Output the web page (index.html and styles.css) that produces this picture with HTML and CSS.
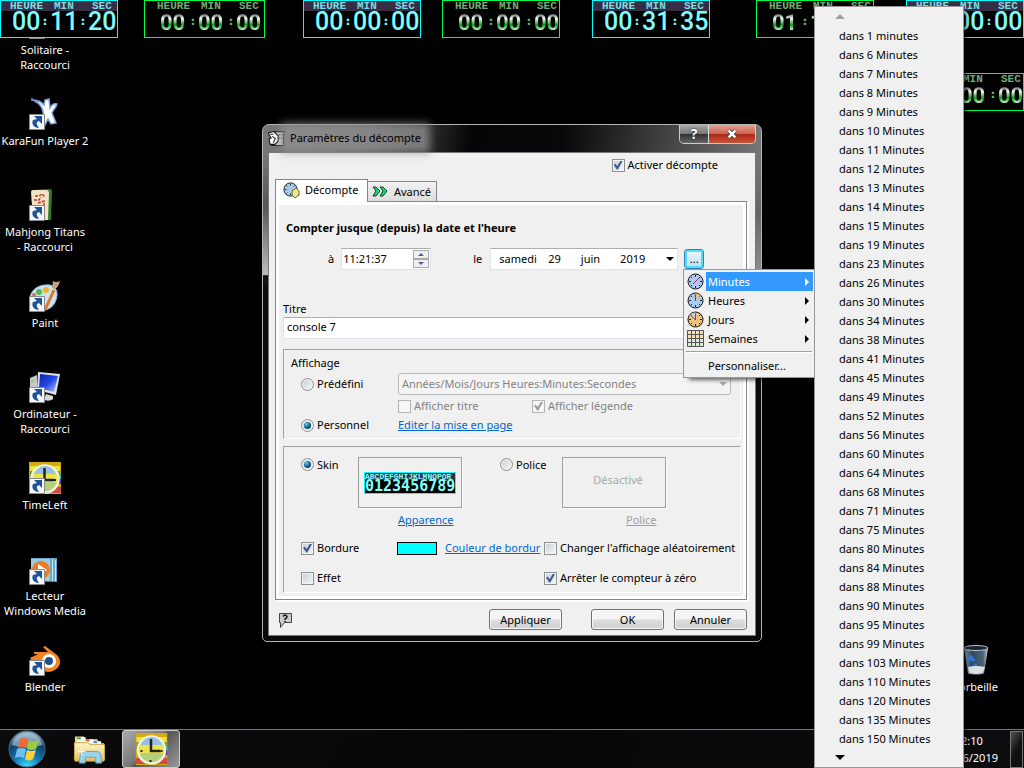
FILE: index.html
```html
<!DOCTYPE html>
<html lang="fr">
<head>
<meta charset="utf-8">
<title>Paramètres du décompte</title>
<link rel="stylesheet" href="styles.css">
</head>
<body>
<svg class="defs" aria-hidden="true">
  <defs>
    <linearGradient id="paper" x2="0" y2="1"><stop stop-color="#fff6c8"/><stop offset="1" stop-color="#e5c66b"/></linearGradient>
    <linearGradient id="screen" x2="1" y2="1"><stop stop-color="#0a22a8"/><stop offset=".5" stop-color="#2346e6"/><stop offset="1" stop-color="#b8ccff"/></linearGradient>
    <linearGradient id="bin" x2="1"><stop stop-color="#9fb0bd"/><stop offset=".3" stop-color="#33475a"/><stop offset=".8" stop-color="#4b6277"/><stop offset="1" stop-color="#c6d2da"/></linearGradient>
    <radialGradient id="orb" cx=".5" cy="1" r="1"><stop stop-color="#3fe0ff"/><stop offset=".35" stop-color="#1180c0"/><stop offset=".7" stop-color="#123f66"/><stop offset="1" stop-color="#8fb3c9"/></radialGradient>
    <symbol id="shortcut" viewBox="0 0 16 16"><path fill="#f4f6f8" stroke="#888" d="M.5.5h15v15H.5z"/><path fill="#1f5299" d="M5 2h8v8l-3-3c-3 1-3 3 0 7-5 0-8-4-6-8l4-1z"/></symbol>
    <symbol id="timeleft" viewBox="0 0 32 32"><path fill="#d3aa12" d="M0 0h32v32H0z"/><path fill="#ece639" d="M1 4h30v5H1z"/><path fill="#78953a" d="M1 9h30v7H1z"/><path fill="#21bbb2" d="M27 12h5v5h-5z"/><path fill="#6035a2" d="M27 17h5v5h-5z"/><path fill="#d54a43" d="M0 25h32v6H0z"/><circle cx="16" cy="17" r="13.5" fill="#b6cf7c" stroke="#f2f3df" stroke-width="2.5"/><path fill="#9abfe6" d="M5 12Q9 4 16 4t11 8z"/><path fill="#ede44a" d="M4 12h24l1 8H4z"/><path fill="none" stroke="#222" stroke-width="2.5" d="M15.500 6v12H25"/><path stroke="#222" stroke-width="2" d="M5 18h2M27 18h-2M15 27v2"/></symbol>
    <symbol id="dial" viewBox="0 0 17 17"><circle cx="8.500" cy="8.500" r="7.500" stroke="#111"/><path fill="none" stroke="#223" d="M8.500 2v2M8.500 13v2M2 8.500h2M13 8.500h2M4 4l1 1M13 4l-1 1M4 13l1-1M13 13l-1-1"/></symbol>
  </defs>
</svg>

<main class="desktop">
  <section class="clock cyan at-1"><div class="units"><span>HEURE</span><span>MIN</span><span>SEC</span></div><div class="digits"><span>00</span><i>:</i><span>11</span><i>:</i><span>20</span></div></section>
  <section class="clock green at-2"><div class="units"><span>HEURE</span><span>MIN</span><span>SEC</span></div><div class="digits"><span>00</span><i>:</i><span>00</span><i>:</i><span>00</span></div></section>
  <section class="clock cyan at-3"><div class="units"><span>HEURE</span><span>MIN</span><span>SEC</span></div><div class="digits"><span>00</span><i>:</i><span>00</span><i>:</i><span>00</span></div></section>
  <section class="clock green at-4"><div class="units"><span>HEURE</span><span>MIN</span><span>SEC</span></div><div class="digits"><span>00</span><i>:</i><span>00</span><i>:</i><span>00</span></div></section>
  <section class="clock cyan at-5"><div class="units"><span>HEURE</span><span>MIN</span><span>SEC</span></div><div class="digits"><span>00</span><i>:</i><span>31</span><i>:</i><span>35</span></div></section>
  <section class="clock green at-6"><div class="units"><span>HEURE</span><span>MIN</span><span>SEC</span></div><div class="digits"><span>01</span><i>:</i><span>10</span><i>:</i><span>00</span></div></section>
  <section class="clock cyan at-7"><div class="units"><span>HEURE</span><span>MIN</span><span>SEC</span></div><div class="digits"><span>00</span><i>:</i><span>00</span><i>:</i><span>00</span></div></section>
  <section class="clock green at-8"><div class="units"><span>HEURE</span><span>MIN</span><span>SEC</span></div><div class="digits"><span>00</span><i>:</i><span>00</span><i>:</i><span>00</span></div></section>

  <nav class="shortcuts">
    <a href="#" class="shortcut"><svg viewBox="0 0 32 32"><use href="#shortcut" y="16" width="16" height="16"/></svg><span>Solitaire -<br>Raccourci</span></a>
    <a href="#" class="shortcut"><svg viewBox="0 0 32 32"><path fill="#fff" stroke="#7a9fe0" stroke-width="1.500" d="M3 2c5 0 9 1 12 5l1-5 4-1 1 9c2-4 4-5 7-4-1 4-4 6-5 9l4 10-5 1-3-5-3 6-3-1c2-9 2-15-3-20-2-2-5-3-7-5z"/><use href="#shortcut" y="16" width="16" height="16"/></svg><span>KaraFun Player 2</span></a>
    <a href="#" class="shortcut"><svg viewBox="0 0 32 32"><path fill="#2c7a2c" d="M4 1l16-1q3 0 3 3l-1 28h-4z"/><path fill="#f3e3c4" d="M2 3q0-2 2-2h13q3 0 3 3l-1 27H4z"/><path fill="none" stroke="#bd3c35" stroke-width="1.500" stroke-dasharray="3 1" d="M6 7h4l3-2 3 3M5 11h5l2-3M9 14l6-2v5M8 18l8-1"/><use href="#shortcut" y="16" width="16" height="16"/></svg><span>Mahjong Titans<br>- Raccourci</span></a>
    <a href="#" class="shortcut"><svg viewBox="0 0 32 32"><path fill="#c8e4f4" stroke="#7fb4d8" d="M1 18C2 8 12 4 21 5c8 2 8 10 6 15-2 6-6 9-11 10z"/><circle cx="17" cy="10" r="3" fill="#f4b122"/><circle cx="10" cy="12" r="3" fill="#5cb845"/><circle cx="5" cy="15" r="2" fill="#df6d5c"/><path stroke="#dc7b23" stroke-width="3" d="M16 30l9-20"/><path fill="#caa27c" d="M23 8l1-7q3 2 7 0-1 5-5 8z"/><use href="#shortcut" y="16" width="16" height="16"/></svg><span>Paint</span></a>
    <a href="#" class="shortcut"><svg viewBox="0 0 32 32"><path fill="#c6c9cc" d="M1 7l7-3v12H1z"/><path fill="#7ed348" d="M2 9h3v2H2z"/><path fill="#dfe2e6" d="M9 1l22 2-4 21-19-5z"/><path fill="url(#screen)" d="M11 3l18 2-4 16-15-4z"/><path fill="#d6d8dc" d="M17 23l7 2v3q-3 3-9 1z"/><use href="#shortcut" y="16" width="16" height="16"/></svg><span>Ordinateur -<br>Raccourci</span></a>
    <a href="#" class="shortcut"><svg viewBox="0 0 32 32"><use href="#timeleft" width="32" height="32"/><use href="#shortcut" y="16" width="16" height="16"/></svg><span>TimeLeft</span></a>
    <a href="#" class="shortcut"><svg viewBox="0 0 32 32"><path fill="#68a5c7" d="M2 5h26v24L2 28z"/><path stroke="#c9e6f2" d="M23.500 6v22M26.500 7v21"/><path fill="#9ccbdf" d="M2 6h19v22H2z"/><circle cx="12" cy="17" r="9" fill="#f07b20"/><path fill="#fff" d="M9 11l9 6-9 6z"/><use href="#shortcut" y="16" width="16" height="16"/></svg><span>Lecteur<br>Windows Media</span></a>
    <a href="#" class="shortcut"><svg viewBox="0 0 32 32"><path fill="#f5821f" d="M14 3l2-1 12 9c8 9-1 17-9 17-8-1-12-6-9-12H2l-1-2 8-4H5V8h14z"/><circle cx="20" cy="17" r="7" fill="#fff"/><circle cx="20" cy="17" r="4" fill="#1d4f90"/><use href="#shortcut" y="16" width="16" height="16"/></svg><span>Blender</span></a>
  </nav>
  <a href="#" class="shortcut bin"><svg viewBox="0 0 32 32"><path fill="url(#bin)" d="M5 4h24l-4 26q-8 2-16 0z"/><ellipse cx="17" cy="4" rx="12" ry="2.500" fill="#19242e" stroke="#b9c7d1"/><path fill="none" stroke="#2f7ae0" stroke-width="3" d="M9 18l3-5 3 4M17 20l-2 4h-4"/><path fill="#dce0e2" d="M9 23q8-2 17 0l-2 6q-7 2-14 0z"/></svg><span>Corbeille</span></a>

  <section class="dialog" role="dialog" aria-labelledby="dialog-title">
    <header class="titlebar">
      <svg class="app-icon" viewBox="0 0 16 16"><path fill="#c8c8c8" stroke="#222" d="M5.500 1.500h10l-1 3v10h-11l2-3z"/><path fill="#fff" stroke="#111" d="M.5 2.500l5-1 4 4v5l-3 3H2l-1-5 2-1-2-3z"/><path fill="none" stroke="#222" d="M2 4h3M4 6l3 2-2 4M11 4v1m2-1v1m-2 2v1m2-1v1"/></svg>
      <h1 id="dialog-title">Paramètres du décompte</h1>
      <div class="caption"><button class="ask" type="button" aria-label="Aide">?</button><button class="close" type="button" aria-label="Fermer"><svg viewBox="0 0 14 12"><path fill="none" stroke="#444" stroke-width="5" d="M3 2l8 8m0-8l-8 8"/><path fill="none" stroke="#fff" stroke-width="3" d="M3 2l8 8m0-8l-8 8"/></svg></button></div>
    </header>
    <form class="client">
      <label class="check activate"><input type="checkbox" checked>Activer décompte</label>
      <div class="tabs" role="tablist">
        <button type="button" class="tab current" role="tab" aria-selected="true"><svg viewBox="0 0 17 17"><use href="#dial" fill="#a7c9ee" width="15" height="15"/><path fill="#ece78b" stroke="#66662a" d="M9 9l4-3 3 3v4l-4 3-3-3z"/></svg>Décompte</button>
        <button type="button" class="tab" role="tab" aria-selected="false"><svg viewBox="0 0 17 17"><path fill="#19d47c" stroke="#173f2d" d="M1 4h3l4 4-4 5H1l3-5zM8 4h3l4 4-4 5H8l3-5z"/></svg>Avancé</button>
      </div>
      <div class="panel"><div class="page">
        <h2>Compter jusque (depuis) la date et l'heure</h2>
        <div class="when">
          <label for="time">à</label>
          <span class="spin"><input id="time" type="text" value="11:21:37"><span class="steps"><button type="button" aria-label="Plus"></button><button type="button" aria-label="Moins"></button></span></span>
          <label for="date" class="on">le</label>
          <span class="pick date"><select id="date"><option>samedi&nbsp;&nbsp;&nbsp;&nbsp;29&nbsp;&nbsp;&nbsp;&nbsp;&nbsp;&nbsp;&nbsp;juin&nbsp;&nbsp;&nbsp;&nbsp;&nbsp;&nbsp;&nbsp;2019</option></select></span>
          <button type="button" class="more">...</button>
        </div>
        <label class="caption-label" for="title">Titre</label>
        <input class="title-box" id="title" type="text" value="console 7">

        <section class="group display">
          <h3>Affichage</h3>
          <div class="row preset"><label class="check"><input type="radio" name="mode">Prédéfini</label><span class="pick disabled"><select disabled aria-label="Format"><option>Années/Mois/Jours Heures:Minutes:Secondes</option></select></span></div>
          <div class="row options"><label class="check off"><input type="checkbox" disabled>Afficher titre</label><label class="check off"><input type="checkbox" disabled checked>Afficher légende</label></div>
          <div class="row custom"><label class="check"><input type="radio" name="mode" checked>Personnel</label><a href="#">Editer la mise en page</a></div>
        </section>

        <section class="group look">
          <div class="row faces">
            <label class="check"><input type="radio" name="look" checked>Skin</label>
            <div class="sample"><div class="skin"><span class="letters">ABCDEFGHIJKLMNOPQR</span><span class="numbers">0123456789</span></div></div>
            <label class="check font"><input type="radio" name="look">Police</label>
            <div class="sample off">Désactivé</div>
          </div>
          <div class="row links"><a href="#">Apparence</a><a href="#" class="dead">Police</a></div>
          <div class="row edge"><label class="check"><input type="checkbox" checked>Bordure</label><button type="button" class="swatch" aria-label="Couleur"></button><a href="#">Couleur de bordur</a><label class="check"><input type="checkbox">Changer l'affichage aléatoirement</label></div>
          <div class="row effect"><label class="check"><input type="checkbox">Effet</label><label class="check"><input type="checkbox" checked>Arrêter le compteur à zéro</label></div>
        </section>
      </div></div>
      <footer class="actions">
        <svg viewBox="0 0 16 16"><path fill="#ccc" stroke="#444" d="M1.500 1.500h12v9h-7l-4 5v-5h-1z"/><path fill="none" stroke="#111" stroke-width="1.500" d="M5 4.500q2-3 4 0 0 1.500-2 2.500v1m0 1v1"/></svg>
        <button type="button" class="push">Appliquer</button>
        <button type="button" class="push ok">OK</button>
        <button type="button" class="push">Annuler</button>
      </footer>
    </form>
  </section>

  <div class="menu units-menu" role="menu">
    <button type="button" class="active" role="menuitem"><svg viewBox="0 0 17 17"><use href="#dial" fill="#a9cbf3"/><path stroke="#b02a5a" d="M6 11l6-6"/></svg><span>Minutes</span></button>
    <button type="button" role="menuitem"><svg viewBox="0 0 17 17"><use href="#dial" fill="#a9cbf3"/><path fill="#f0c070" d="M8.500 8.500V1.500q3 0 5 2z"/><path stroke="#b02a5a" d="M8.500 9V3"/></svg><span>Heures</span></button>
    <button type="button" role="menuitem"><svg viewBox="0 0 17 17"><use href="#dial" fill="#efc27a"/><path fill="#b5d4f4" d="M8.500 8.500V1.500q-3 0-5 2z"/><path stroke="#b02a5a" d="M8.500 9V3M8.500 9l-4-4"/></svg><span>Jours</span></button>
    <button type="button" role="menuitem"><svg viewBox="0 0 17 17"><path fill="#f8dfb0" d="M0 0h17v8H0z"/><path fill="#dcebd9" d="M0 8h17v9H0z"/><path fill="none" stroke="#555" d="M.5.5h16v16H.5zM4.500 0v17M8.500 0v17M12.500 0v17M0 4.500h17M0 8.500h17M0 12.500h17"/></svg><span>Semaines</span></button>
    <hr>
    <button type="button" class="plain" role="menuitem"><span>Personnaliser...</span></button>
  </div>
</main>

<footer class="taskbar">
  <button type="button" class="start" aria-label="Démarrer"><svg viewBox="0 0 38 38"><circle cx="19" cy="19" r="18" fill="url(#orb)" stroke="#46667a"/><path fill="#d9e8f1" opacity=".5" d="M4 15Q7 3 19 3t15 12q-14 5-30 0z"/><path fill="#ef6a32" d="M12 9q4-2 8 0l-2 9q-4-2-8 0z"/><path fill="#9ccb3b" d="M21 10q5 3 10 0l-3 9q-4 2-9 0z"/><path fill="#70bff0" d="M9 19q4-2 9 0l-2 9q-4-2-9 0z"/><path fill="#ffd23c" d="M19 20q4 2 9 0l-3 9q-4 3-8 0z"/></svg></button>
  <button type="button" class="task" aria-label="Explorateur"><svg viewBox="0 0 34 32"><path fill="#f0d68a" d="M2 3h9l2 3h12l2 4h5v19H2z"/><path fill="#fff" d="M4 4h9v5H4zM12 6h9v4h-9zM20 8h9v4h-9z"/><path fill="#27b02e" d="M4 4h4v2H4z"/><path fill="#dd4a26" d="M13 6h4v2h-4z"/><path fill="#2a8ce0" d="M21 8h4v2h-4z"/><path fill="url(#paper)" stroke="#cba951" d="M1.500 9.500h14l2 2h15v16h-31z"/><path fill="#9fd3ec" stroke="#5ba5cc" d="M6.500 30.500l1-9q1-3 4-3h13q3 0 4 3l1 9h-6v-6h-11v6z"/><path stroke="#fff" d="M9 14v9M5 18.500h8"/></svg></button>
  <button type="button" class="task running" aria-label="TimeLeft"><svg viewBox="0 0 32 32"><use href="#timeleft" width="32" height="32"/></svg></button>
  <div class="tray"><span>22:10</span><span>29/06/2019</span></div>
  <button type="button" class="peek" aria-label="Bureau"></button>
</footer>

<div class="menu delays" role="menu">
  <button type="button" class="scroll up" aria-label="Défiler vers le haut"></button>
  <button type="button" role="menuitem">dans 1 minutes</button>
  <button type="button" role="menuitem">dans 6 Minutes</button>
  <button type="button" role="menuitem">dans 7 Minutes</button>
  <button type="button" role="menuitem">dans 8 Minutes</button>
  <button type="button" role="menuitem">dans 9 Minutes</button>
  <button type="button" role="menuitem">dans 10 Minutes</button>
  <button type="button" role="menuitem">dans 11 Minutes</button>
  <button type="button" role="menuitem">dans 12 Minutes</button>
  <button type="button" role="menuitem">dans 13 Minutes</button>
  <button type="button" role="menuitem">dans 14 Minutes</button>
  <button type="button" role="menuitem">dans 15 Minutes</button>
  <button type="button" role="menuitem">dans 19 Minutes</button>
  <button type="button" role="menuitem">dans 23 Minutes</button>
  <button type="button" role="menuitem">dans 26 Minutes</button>
  <button type="button" role="menuitem">dans 30 Minutes</button>
  <button type="button" role="menuitem">dans 34 Minutes</button>
  <button type="button" role="menuitem">dans 38 Minutes</button>
  <button type="button" role="menuitem">dans 41 Minutes</button>
  <button type="button" role="menuitem">dans 45 Minutes</button>
  <button type="button" role="menuitem">dans 49 Minutes</button>
  <button type="button" role="menuitem">dans 52 Minutes</button>
  <button type="button" role="menuitem">dans 56 Minutes</button>
  <button type="button" role="menuitem">dans 60 Minutes</button>
  <button type="button" role="menuitem">dans 64 Minutes</button>
  <button type="button" role="menuitem">dans 68 Minutes</button>
  <button type="button" role="menuitem">dans 71 Minutes</button>
  <button type="button" role="menuitem">dans 75 Minutes</button>
  <button type="button" role="menuitem">dans 80 Minutes</button>
  <button type="button" role="menuitem">dans 84 Minutes</button>
  <button type="button" role="menuitem">dans 88 Minutes</button>
  <button type="button" role="menuitem">dans 90 Minutes</button>
  <button type="button" role="menuitem">dans 95 Minutes</button>
  <button type="button" role="menuitem">dans 99 Minutes</button>
  <button type="button" role="menuitem">dans 103 Minutes</button>
  <button type="button" role="menuitem">dans 110 Minutes</button>
  <button type="button" role="menuitem">dans 120 Minutes</button>
  <button type="button" role="menuitem">dans 135 Minutes</button>
  <button type="button" role="menuitem">dans 150 Minutes</button>
  <button type="button" class="scroll down" aria-label="Défiler vers le bas"></button>
</div>
</body>
</html>
```
FILE: styles.css
```css
* { box-sizing: border-box; }
body {
  margin: 0;
  min-height: 100vh;
  display: flex;
  flex-direction: column;
  position: relative;
  overflow: hidden;
  background: #000;
  color: #000;
  font: 11px/16px "Noto Sans", "Open Sans", sans-serif;
}
button, input, select { font: inherit; color: inherit; margin: 0; }
button { padding: 0; border: 0; background: none; }
h1, h2, h3 { margin: 0; font: inherit; }
a { color: #0066cc; }
svg { display: block; flex: none; }
.defs { position: absolute; width: 0; height: 0; }
.desktop { flex: 1; position: relative; }

/* Countdown widgets, free on the desktop */
.clock {
  position: absolute;
  width: 118px;
  height: 38px;
  border: 1px solid #00ffff;
  background: #000;
  color: #7ffcff;
  overflow: hidden;
  z-index: 1;
}
.units {
  display: grid;
  grid-template-columns: 44px 38px 1fr;
  padding-left: 9px;
  height: 10px;
  font: bold 11px/10px "Liberation Mono", monospace;
}
.cyan .units { background: #352e45; color: #79dbe5; }
.digits {
  display: grid;
  grid-template-columns: 28px 10px 28px 10px 28px;
  padding-left: 11px;
  font: 500 25px/21px Roboto, sans-serif;
}
.digits i { font: bold 13px/20px "DejaVu Sans Mono", monospace; text-align: center; }
.green { border-color: #00ff40; color: #6fae6f; }
.green .units { color: #75aa75; padding-left: 12px; }
.green .digits { padding-left: 15px; font: bold 22px/23px Roboto, sans-serif; }
.green .digits span {
  background: linear-gradient(#555 12%, #f4fff4 32%, #119c1b 60%, #d8ffd8 85%);
  background-clip: text;
  color: transparent;
}
.at-1 { left: 0; top: 0; }
.at-2 { left: 144px; top: 0; width: 121px; }
.at-3 { left: 303px; top: 0; }
.at-4 { left: 442px; top: 0; }
.at-5 { left: 592px; top: 0; }
.at-6 { left: 756px; top: 0; }
.at-7 { right: 0; top: 0; }
.at-8 { right: 0; top: 73px; }

/* Desktop shortcuts */
.shortcuts { display: grid; grid-template-rows: repeat(7, 91px) auto; width: 90px; padding-top: 7px; }
.shortcut {
  display: flex;
  flex-direction: column;
  align-items: center;
  gap: 3px;
  color: #fff;
  line-height: 15px;
  text-align: center;
  text-decoration: none;
  white-space: nowrap;
}
.shortcut svg { width: 32px; height: 32px; }
.bin { position: absolute; right: 4px; bottom: 35px; width: 90px; }

/* Dialog window */
.dialog {
  position: absolute;
  left: 262px;
  top: 124px;
  width: 500px;
  padding: 0 5px 5px;
  border: 1px solid #b5b5b5;
  border-radius: 7px 7px 5px 5px;
  background:
    linear-gradient(100deg, #777 0, #666 20%, #050507 42%, #08080a 60%, #4c4c4c 84%, #777 100%) top / 100% 28px no-repeat,
    linear-gradient(#777, #555 40%, #bbb 92%, #111 93%) left 28px / 6px 132px no-repeat,
    linear-gradient(#777, #666 40%, #999 90%, #111) right 28px / 6px 150px no-repeat,
    #0a0a0c;
}
.titlebar { display: flex; align-items: flex-start; height: 27px; }
.app-icon { width: 17px; height: 17px; margin-top: 5px; }
.titlebar h1 {
  margin: 4px 0 0 2px;
  padding: 0 3px;
  line-height: 18px;
  background: rgba(145, 145, 145, .75);
  box-shadow: 0 0 8px 6px rgba(145, 145, 145, .75);
}
.caption { display: flex; height: 19px; margin-left: auto; border: 1px solid #ccc; border-top: 0; border-radius: 0 0 5px 5px; overflow: hidden; }
.caption button { display: grid; place-items: center; }
.ask { width: 28px; color: #fff; font-size: 14px; font-weight: bold; text-shadow: 0 0 2px #000; background: linear-gradient(#aaa, #777 48%, #333 52%, #666); }
.close { width: 47px; border-left: 1px solid #ddd; background: linear-gradient(#e5a093, #cb6553 48%, #a92b17 52%, #c95338); }
.close svg { width: 12px; height: 10px; }
.client {
  display: flex;
  flex-direction: column;
  padding: 3px 8px 4px 6px;
  border: 1px solid #777;
  background: #f0f0f0;
}
.check { display: flex; align-items: center; gap: 3px; white-space: nowrap; }
.check input {
  appearance: none;
  display: grid;
  place-items: center;
  width: 13px;
  height: 13px;
  border: 1px solid #8e8f8f;
  background: linear-gradient(135deg, #c9ced4, #f6f6f6);
  box-shadow: inset 0 0 0 1px #f4f4f4;
  flex: none;
}
.check input[type=radio] { border-radius: 50%; }
.check input[type=checkbox]:checked::before {
  content: "";
  width: 9px;
  height: 9px;
  background: #3d5a99;
  clip-path: polygon(0 45%, 20% 35%, 42% 62%, 78% 0, 100% 6%, 48% 100%, 36% 100%);
}
.check input[type=radio]:checked::before {
  content: "";
  width: 7px;
  height: 7px;
  border-radius: 50%;
  background: radial-gradient(circle at 35% 30%, #6fd0ee, #10628f 50%, #0a2f50);
}
.check.off { color: #838383; }
.check.off input { border-color: #b5b5b5; background: #f7f7f7; }
.check.off input:checked::before { background: #9b9b9b; }
.activate { align-self: flex-end; margin-right: 29px; line-height: 18px; }
.tabs { display: flex; align-items: flex-end; height: 27px; padding-top: 4px; }
.tab {
  display: flex;
  align-items: center;
  gap: 5px;
  width: 69px;
  height: 20px;
  padding-left: 4px;
  border: 1px solid #84868f;
  border-left: 0;
  border-bottom: 0;
  background: linear-gradient(#f2f2f2, #ddd);
}
.tab svg { width: 17px; height: 17px; }
.tab.current {
  width: 93px;
  height: 23px;
  margin-bottom: -1px;
  padding: 0 0 2px 7px;
  border-left: 1px solid #84868f;
  background: #fff;
  position: relative;
}
.panel { padding: 3px; border: 1px solid #84868f; background: #fff; box-shadow: 2px 2px #fff; }
.page { padding: 15px 2px 3px 4px; background: #f0f0f0; }
.page h2 { padding-left: 3px; font-weight: bold; }
.when { display: flex; align-items: center; height: 22px; margin-top: 12px; padding-left: 45px; }
.when .on { margin-left: 42px; }
.spin {
  display: flex;
  align-items: center;
  width: 90px;
  height: 22px;
  margin-left: 7px;
  padding: 1px;
  border: 1px solid #e0e3ea;
  border-top-color: #abadb3;
  background: #fff;
}
.spin input { flex: 1; min-width: 0; padding: 0; border: 0; background: none; }
.steps { display: flex; flex-direction: column; width: 16px; }
.steps button { display: grid; place-items: center; height: 9px; border: 1px solid #aaa; background: #f0f0f0; }
.steps button::before { content: ""; border: 3px solid transparent; border-top: 0; border-bottom: 3px solid #4663a8; }
.steps button + button::before { border-bottom: 0; border-top: 3px solid #4663a8; }
.pick { position: relative; display: flex; }
.pick::after {
  content: "";
  position: absolute;
  right: 4px;
  top: 9px;
  border: 4px solid transparent;
  border-top-color: #000;
  border-bottom: 0;
}
.pick select {
  appearance: none;
  width: 100%;
  height: 22px;
  padding: 0 16px 0 8px;
  border: 1px solid #e0e3ea;
  border-top-color: #abadb3;
  border-radius: 0;
  background: #fff;
}
.date { width: 188px; margin-left: 8px; }
.more {
  width: 20px;
  height: 20px;
  margin-left: 6px;
  border: 1px solid #3c7fb1;
  border-radius: 3px;
  background: linear-gradient(#eef8fd, #b9dff2);
  box-shadow: inset 0 0 0 2px #4fdcfa;
  line-height: 16px;
}
.caption-label { display: block; width: max-content; margin-top: 31px; }
.title-box {
  display: block;
  width: 100%;
  height: 22px;
  padding: 0 3px 3px;
  border: 1px solid #e2e3ea;
  border-top-color: #abadb3;
  background: #fff;
}
.group {
  border: 1px solid #a0a0a0;
  border-right-color: #fff;
  border-bottom-color: #fff;
}
.row { display: flex; align-items: center; height: 16px; }
.display { margin-top: 10px; padding: 5px 9px 5px 17px; }
.display h3 { margin-left: -10px; }
.preset { height: 22px; margin-top: 2px; }
.preset .check, .custom .check { width: 97px; }
.pick.disabled { flex: 1; }
.pick.disabled::after { border-top-color: #aaa; }
.pick.disabled select { padding-left: 3px; border: 1px solid #b5b8bc; border-radius: 3px; background: #f4f4f4; color: #838383; opacity: 1; }
.options { margin-top: 3px; padding-left: 97px; }
.options .check:first-child { width: 134px; }
.custom { margin-top: 3px; }
.look { margin-top: 7px; padding: 10px 0 6px 17px; }
.faces { height: 51px; align-items: flex-start; }
.faces .check { width: 57px; height: 15px; }
.faces .font { width: 62px; margin-left: 38px; }
.sample { display: grid; place-items: center; width: 104px; height: 51px; border: 1px solid #a0a0a0; box-shadow: 1px 1px #fff; }
.sample.off { padding: 0 0 6px 8px; color: #a8a8a8; }
.skin {
  display: flex;
  flex-direction: column;
  width: 92px;
  height: 22px;
  border: 1px solid #00ffff;
  background: #000;
  color: #7fffff;
  font: bold 8px/7px "Liberation Mono", monospace;
  overflow: hidden;
}
.letters { background: #352e45; }
.numbers { font: bold 15px/13px "DejaVu Sans Mono", monospace; }
.links { margin-top: 4px; }
.links a { width: 58px; margin-left: 97px; }
.links .dead { margin-left: 170px; color: #a0a0a0; }
.edge { margin-top: 12px; }
.edge .check:first-child { width: 96px; }
.swatch { width: 40px; height: 13px; border: 1px solid #000; background: #00ffff; }
.edge a { width: 98px; margin: 0 1px 0 8px; white-space: nowrap; }
.effect { margin-top: 14px; }
.effect .check:first-child { width: 243px; }
.actions { display: flex; align-items: center; padding: 9px 0 1px 3px; }
.actions svg { width: 16px; height: 16px; margin-right: auto; }
.push {
  width: 73px;
  height: 21px;
  margin-right: 10px;
  border: 1px solid #707070;
  border-radius: 3px;
  background: linear-gradient(#f4f4f4 48%, #dedede 52%, #d0d0d0);
  box-shadow: inset 0 0 0 1px #fafafa;
}
.push.ok { margin-left: 19px; }
.push:last-child { margin-right: 0; }

/* Menus */
.menu { position: absolute; display: flex; flex-direction: column; border: 1px solid #979797; background: #f0f0f0; box-shadow: 4px 4px 4px -2px rgba(0, 0, 0, .6); z-index: 3; }
.menu button { height: 19px; text-align: left; white-space: nowrap; }
.units-menu { left: 683px; top: 269px; width: 134px; padding: 2px 3px 2px 1px; }
.units-menu button { display: flex; align-items: center; gap: 2px; padding-left: 2px; }
.units-menu svg { width: 17px; height: 17px; }
.units-menu span { display: flex; flex: 1; align-items: center; justify-content: space-between; height: 19px; padding: 0 4px 0 2px; }
.units-menu button:not(.plain) span::after { content: ""; border: 4px solid transparent; border-left: 4px solid #000; border-right: 0; }
.units-menu .active span { background: #3399ff; color: #fff; }
.units-menu button.active span::after { border-left-color: #fff; }
.units-menu hr { width: auto; margin: 3px 1px; border: 0; border-top: 1px solid #a0a0a0; border-bottom: 1px solid #fff; }
.units-menu .plain { padding-left: 21px; }
.delays { right: 60px; top: 6px; bottom: 0; width: 150px; padding: 0; z-index: 4; }
.delays button { padding-left: 24px; }
.delays .scroll { padding-left: 20px; }
.scroll::before { content: ""; display: block; width: 0; border: 5px solid transparent; }
.up::before { border-top: 0; border-bottom-color: #a0a0a0; }
.down::before { border-bottom: 0; border-top-color: #000; }

/* Taskbar */
.taskbar {
  display: flex;
  align-items: center;
  height: 39px;
  padding: 0 1px 0 8px;
  border-top: 1px solid #777;
  background: linear-gradient(110deg, #0b0b0d, #060607 50%, #0d0d10);
}
.start svg { width: 38px; height: 38px; }
.task { display: grid; place-items: center; width: 58px; height: 38px; border: 1px solid transparent; border-radius: 3px; margin-left: 14px; }
.task svg { width: 33px; height: 32px; }
.running { margin-left: 4px; border-color: #ccc; background: linear-gradient(135deg, #aaa, #777 45%, #555 50%, #999); }
.tray { display: flex; flex-direction: column; align-items: center; gap: 1px; margin: 0 12px 0 auto; color: #fff; }
.peek { width: 13px; height: 37px; border: 1px solid #777; background: linear-gradient(120deg, #555, #111 50%); }
```
